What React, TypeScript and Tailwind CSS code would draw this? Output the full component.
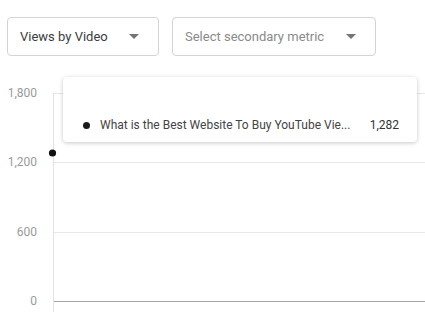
import React from 'react';

const yTicks = [
  { label: '1,800', y: 37 },
  { label: '1,200', y: 106 },
  { label: '600', y: 176 },
  { label: '0', y: 245 },
];

function Caret() {
  return (
    <svg width="10" height="5" viewBox="0 0 10 5" className="shrink-0">
      <path d="M0 0 L10 0 L5 5 Z" fill="#757575" />
    </svg>
  );
}

function Select({ label, placeholder, width }: { label: string; placeholder?: boolean; width: string }) {
  return (
    <div
      className={`${width} h-[39px] flex items-center justify-between pl-3 pr-[19px] border border-[#d4d4d4] rounded-[4px] bg-white`}
    >
      <span className={`text-[13px] ${placeholder ? 'text-[#8a8a8a]' : 'text-[#3c3c3c]'}`}>{label}</span>
      <Caret />
    </div>
  );
}

export default function App() {
  return (
    <div className="w-[425px] h-[331px] bg-white overflow-hidden font-['Roboto','Liberation_Sans',sans-serif]">
      <div className="flex gap-[13px] pt-[17px] pl-[7px]">
        <Select label="Views by Video" width="w-[152px]" />
        <Select label="Select secondary metric" placeholder width="w-[204px]" />
      </div>

      <div className="relative h-[275px]">
        <svg width="425" height="275" className="block">
          {yTicks.map((t) => (
            <g key={t.label}>
              <line
                x1="53"
                x2="425"
                y1={t.y + 0.5}
                y2={t.y + 0.5}
                stroke={t.label === '0' ? '#a3a3a3' : '#e8e8e8'}
                strokeWidth="1"
              />
              <text
                x="37"
                y={t.y + 0.5}
                textAnchor="end"
                dominantBaseline="middle"
                fontSize="12"
                fill="#9a9a9a"
                fontFamily="Roboto, 'Liberation Sans', sans-serif"
              >
                {t.label}
              </text>
            </g>
          ))}
          <line x1="53.5" x2="53.5" y1="37" y2="256" stroke="#e3e3e3" strokeWidth="1" />
          <circle cx="52.5" cy="97" r="3.6" fill="#111" />
        </svg>

        {/* tooltip */}
        <div className="absolute left-[63px] top-[21px] w-[354px] h-[65px] bg-white rounded-[4px] shadow-[0_1px_4px_rgba(0,0,0,0.22)] pt-[38px] pl-[20px] pr-[18px]">
          <div className="flex items-center h-5 text-[12px]">
            <span className="w-[7px] h-[7px] rounded-full bg-[#1a1a1a] shrink-0" />
            <span className="ml-[10px] text-[#444] flex-1 truncate">
              What is the Best Website To Buy YouTube Vie...
            </span>
            <span className="text-[#333]">1,282</span>
          </div>
        </div>
      </div>
    </div>
  );
}
